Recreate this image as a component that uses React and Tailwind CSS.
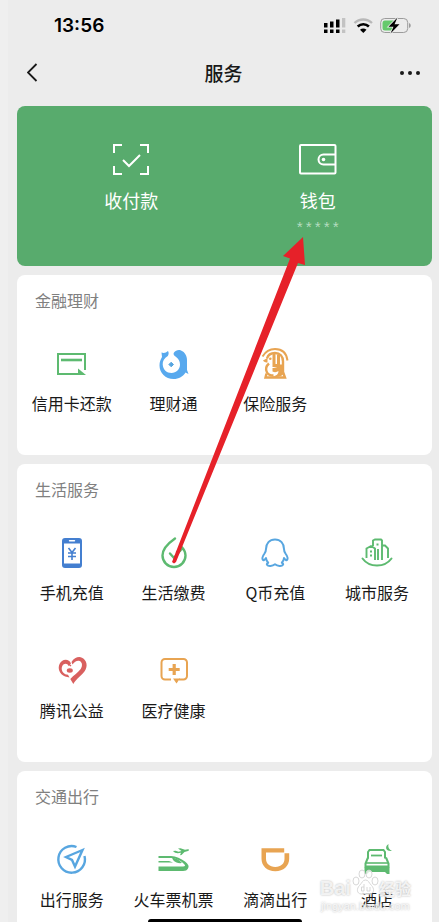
import React from "react";

const GREEN = "#5dba70";
const BLUE = "#58a6e0";
const ORANGE = "#e8a452";

function Icon({ children }) {
  return (
    <svg className="h-9 w-9" viewBox="0 0 36 36" fill="none" aria-hidden="true">
      {children}
    </svg>
  );
}

const CreditCardIcon = () => (
  <Icon>
    <path d="M31 24V8H4v20h22" stroke={GREEN} strokeWidth="2" />
    <path d="M7 14h21" stroke={GREEN} strokeWidth="2.600" />
    <path d="M24 22.500l8 6.500h-8z" fill={GREEN} />
  </Icon>
);

const WealthIcon = () => (
  <Icon>
    <path
      d="M5.500 6.500c2.500 1 4.500.2 6.500-1.500 1 1.500.8 3.500-.2 5C8.300 12 6.500 15 6.700 18.500c.3 5 4 8.500 8.800 8.500s8.500-3.700 8.500-8.500c0-3.500-1.700-6-4.200-7.700-2-1.300-2.800-2.800-1.800-4.300C19.500 4.500 22.500 3.500 25 4.500c4 1.500 6 5.500 6 10v9.500l1.500 4-3-1.500C27 30.500 23 33 17.500 33 9.500 33 3.500 27 3.500 19.500c0-3.500 1-6 2.500-8.500z"
      fill="#58a9ee"
    />
    <path d="M15.200 16.200l2.300 2.300-2.300 2.300-2.300-2.300z" fill={BLUE} stroke={BLUE} strokeLinejoin="round" />
  </Icon>
);

const InsuranceIcon = () => (
  <Icon>
    <path d="M5.500 10.500C8.500 5.500 12.500 3 18 3c7 0 11.500 4 12.500 11.500" stroke={ORANGE} strokeWidth="2" />
    <path d="M10 12.500c1-3.500 4-5.500 8-5.500 5 0 8 3.500 8 8.500V26l2 5.500H8.500l1-4" stroke={ORANGE} strokeWidth="2.400" />
    <path d="M6 14.500l4.500-2.500v4.500c-2 0-3.500-.5-4.500-2z" fill={ORANGE} />
    <path d="M12 17.500c-3 2.500-3.500 6-2 9 1.300 2.500 3.500 3 6.500 3" stroke={ORANGE} strokeWidth="2.400" />
    <path d="M17 7v12.500h4.500V8.500" stroke={ORANGE} strokeWidth="3" />
    <path d="M15.500 22c3 0 6-1 6-3.500h5V28c-2 3-7 3.500-11 2.500 4-.5 6-2.500 6-5.500-1.500 1.300-4 1.500-6 .5z" fill={ORANGE} />
    <circle cx="13.300" cy="12.800" r="1.300" fill={ORANGE} />
  </Icon>
);

const PhoneIcon = () => (
  <Icon>
    <rect x="8" y="3" width="20" height="30" rx="3" fill="#447fd0" />
    <rect x="10" y="8.500" width="16" height="20" fill="#fff" />
    <path d="M15.500 5.700h5" stroke="#fff" strokeWidth="1.400" strokeLinecap="round" />
    <path d="M14.500 13l3.500 4.500 3.500-4.500M18 17.500V25M14 18h8M14 21.500h8" stroke="#447fd0" strokeWidth="1.600" />
  </Icon>
);

const DropIcon = () => (
  <Icon>
    <path
      d="M19 3.500C14 7 6.500 13.500 6.500 20.500a11.500 11.500 0 0 0 23 0c0-3.500-1.500-6-3.500-8.300M21 17c2 0 4-1.500 5-4.500"
      stroke={GREEN}
      strokeWidth="2.400"
      strokeLinecap="round"
    />
    <path d="M14 18.500l4 4.500 5-6" stroke={GREEN} strokeWidth="2.400" strokeLinecap="round" />
  </Icon>
);

const QCoinIcon = () => (
  <Icon>
    <path
      d="M18 4.500c-5.500 0-9 4-9 9.500 0 2-.5 3-1.500 4.500-1.800 2.500-2.500 5-1.700 6.300.7 1 2.200-.2 3.200-1.800.2 2 .8 3.300 2.200 4.800-1.200.4-1.700 1.200-1.200 2 1 1.700 5.500 1.500 8-.5 2.500 2 7 2.200 8 .5.5-.8 0-1.600-1.200-2 1.400-1.500 2-2.800 2.200-4.800 1 1.600 2.500 2.800 3.200 1.800.8-1.300.1-3.800-1.700-6.300C27.500 17 27 16 27 14c0-5.500-3.500-9.500-9-9.500z"
      stroke={BLUE}
      strokeWidth="2"
      strokeLinejoin="round"
    />
  </Icon>
);

const CityIcon = () => (
  <Icon>
    <path d="M7.500 23V13.500L12 11l4 2.500V25M14 11V5.500l2-1h6l1 1V25M23 10.500h3l3 3V23M19 14v11" stroke={GREEN} strokeWidth="1.900" />
    <path d="M3.500 23.500C7 28.300 12 30.500 18 30.500s11-2.200 14.500-7" stroke={GREEN} strokeWidth="2" strokeLinecap="round" />
    <path d="M11 15.500h2v2h-2zM11 19.500h2v2h-2zM17.500 8.500h2v2h-2z" fill={GREEN} />
  </Icon>
);

const CharityIcon = () => (
  <Icon>
    <path
      d="M17 10.500c-1.500-4-6-4.500-9-2.500-4 3-4.500 9-.5 13.200 2 2 5 2.800 8 3.300l-1.500-2.700c-2-.2-3.500-.8-4.600-2-2.400-2.800-2-6.500 0-8.300 2.200-1.500 4.500-.5 5 1.500z"
      fill="#d9605f"
    />
    <path
      d="M17.500 9c2.500-4 7-6 10.500-4.300 5 2.500 6 8.500 2.800 13.300-2.800 4-8.300 7.500-11.500 13l-3-5c3.500-3.700 7.700-6.500 10.400-10 2-3 1.700-6.700-1-8-2.500-1-5.200.8-7.200 3.500z"
      fill="#d9605f"
    />
    <ellipse cx="15.800" cy="17.500" rx="3" ry="2.200" fill="#d9605f" />
    <path d="M14.500 11l2.500 2" stroke="#d9605f" strokeWidth="1.500" />
  </Icon>
);

const HealthIcon = () => (
  <Icon>
    <path d="M15 26.500H9A3.500 3.500 0 0 1 5.500 23V9.500A3.500 3.500 0 0 1 9 6h18.500A3.500 3.500 0 0 1 31 9.500V23a3.500 3.500 0 0 1-3.500 3.500H23" stroke={ORANGE} strokeWidth="2" />
    <path d="M17 25.500h7l-3.500 5z" fill={ORANGE} />
    <path d="M18.200 11v11M12.700 16.500h11" stroke={ORANGE} strokeWidth="3.200" />
  </Icon>
);

const CompassIcon = () => (
  <Icon>
    <path d="M22.500 5A13.300 13.300 0 1 0 30.500 14" stroke={BLUE} strokeWidth="2.400" />
    <path d="M28.500 8L12 15l6 3 3 6.500z" stroke={BLUE} strokeWidth="2.400" />
  </Icon>
);

const TrainIcon = () => (
  <Icon>
    <path d="M2.500 14H15c5 0 10 2.500 14 5.500 3 2.500 4.500 4.500 3 7-.8 1.700-2.500 2.500-5 2.500H2.500v-4.500H27c2 0 2.500-1 1.500-2-3-3.500-8-6.500-13.500-6.500H2.500z" fill={GREEN} />
    <path d="M2.500 19H13l4 1.500H2.500z" fill={GREEN} />
    <path d="M16 15.500c4 .5 7.500 2.500 10 5.500-3.500.5-6.500-.5-8-2-1-1-1.500-2-2-3.500z" fill={GREEN} />
    <path d="M17 9l2.500-.3 3 1L25.500 9 22 6.500l2.500-.3 4.500 1.600 3-.6c1.500 0 1.300 1.200 0 1.700L28.500 10l-3 3-1.500.2 1-2.500c-3 .8-6 .8-8-1.700z" fill={GREEN} />
  </Icon>
);

const DidiIcon = () => (
  <Icon>
    <path d="M4.500 6.300h22.700v4.200H9v6.300C9 21.500 12.500 25 18.300 25s9.200-3.500 9.200-8.200v-5.600h4.700v5.600C32.200 24 26.500 29.300 18.300 29.300S4.500 24 4.500 16.800z" fill={ORANGE} />
  </Icon>
);

const HotelIcon = () => (
  <Icon>
    <path d="M9 16.500V10l1.500-2h14L26 10v6.500" stroke={GREEN} strokeWidth="2" />
    <path d="M12 13.500h11" stroke={GREEN} strokeWidth="1.800" />
    <path d="M9 15.500l-2.500 6v3h23v-3l-2.500-6" stroke={GREEN} strokeWidth="2" />
    <path d="M7 21h22" stroke={GREEN} strokeWidth="1.600" />
    <path d="M5.500 25h25v7H28l-2-2H10l-2 2H5.500z" fill={GREEN} />
    <path d="M29.500 2c-4 2.500-3 7.800 3.500 7-3-1.300-4.300-3.800-3.500-7z" fill={GREEN} />
  </Icon>
);

const SECTIONS = [
  {
    title: "金融理财",
    items: [
      ["信用卡还款", CreditCardIcon],
      ["理财通", WealthIcon],
      ["保险服务", InsuranceIcon],
    ],
  },
  {
    title: "生活服务",
    items: [
      ["手机充值", PhoneIcon],
      ["生活缴费", DropIcon],
      ["Q币充值", QCoinIcon],
      ["城市服务", CityIcon],
      ["腾讯公益", CharityIcon],
      ["医疗健康", HealthIcon],
    ],
  },
  {
    title: "交通出行",
    items: [
      ["出行服务", CompassIcon],
      ["火车票机票", TrainIcon],
      ["滴滴出行", DidiIcon],
      ["酒店", HotelIcon],
    ],
  },
];

function StatusBar() {
  return (
    <div className="flex h-12 items-center justify-between pt-1 pr-7 pl-[46px]">
      <span className="font-['Inter',sans-serif] text-[19px] leading-6 font-semibold text-black">13:56</span>
      <svg className="h-5 w-[88px]" viewBox="324 15 88 20" fill="none" aria-hidden="true">
        <path d="M325 22h3.500v4.500H325zM331 20.500h3.500v6H331zM337 18.500h3.500v8H337zM325 28.500h3.500V32H325zM331 28.500h3.500V32H331zM337 28.500h3.500V32H337z" fill="#000" />
        <path d="M343 17h3.300v9.500H343zM343 28.500h3.300V32H343z" fill="#c3c3c3" />
        <path d="M355.500 22c5-4.700 12.500-4.700 17.500 0" stroke="#b8b8b8" strokeWidth="2.400" />
        <path d="M358.700 25.500c3.200-3 8-3 11.200 0" stroke="#000" strokeWidth="2.600" />
        <path d="M361 28.700c2-1.600 4.500-1.600 6.500 0l-3.200 3.300z" fill="#000" />
        <rect x="381.700" y="17.500" width="27" height="14" rx="4" stroke="#9b9b9b" />
        <path d="M410 22c2.300.8 2.300 4.200 0 5z" fill="#9b9b9b" />
        <path d="M386 19.500h9v10h-9a2.500 2.500 0 0 1-2.500-2.500v-5a2.500 2.500 0 0 1 2.500-2.500z" fill="#65c96c" />
        <path d="M398.500 16.500l-9 9.300h5l-3 6.700 9-9.300h-5z" fill="#000" stroke="#ececec" strokeWidth="1.600" paintOrder="stroke" />
      </svg>
    </div>
  );
}

function NavBar() {
  return (
    <header className="flex h-[50px] items-center justify-between px-[19px]">
      <button type="button" aria-label="返回" className="flex h-6 w-7 items-center">
        <svg className="h-5 w-4" viewBox="0 0 16 20" fill="none">
          <path d="M9.500 1L1 9.500 9.500 18" stroke="#191919" strokeWidth="1.800" />
        </svg>
      </button>
      <h1 className="text-[19px] leading-7 font-medium text-[#191919]">服务</h1>
      <button type="button" aria-label="更多" className="flex h-6 w-7 items-center justify-end">
        <svg className="h-1 w-5" viewBox="0 0 20 4" fill="#191919">
          <circle cx="2" cy="2" r="2" />
          <circle cx="10" cy="2" r="2" />
          <circle cx="18" cy="2" r="2" />
        </svg>
      </button>
    </header>
  );
}

function WalletCard() {
  return (
    <section className="grid h-40 grid-cols-2 items-start rounded-lg bg-[#58ab6d] px-[21px] pt-[34px] text-white">
      <button type="button" className="flex flex-col items-center">
        <svg className="h-10 w-10" viewBox="0 0 40 40" fill="none" stroke="#fff" strokeWidth="2">
          <path d="M11 5H3v8M29 5h8v8M11 34H3v-8M29 34h8v-8M12 20l6 6 11-11" />
        </svg>
        <span className="mt-2 text-[18px] leading-6">收付款</span>
      </button>
      <button type="button" className="flex flex-col items-center">
        <svg className="h-10 w-10" viewBox="0 0 40 40" fill="none" stroke="#fff" strokeWidth="2">
          <rect x="2" y="5" width="35.500" height="28.500" rx="1" />
          <path d="M37.500 14.500H25.500a5 5 0 0 0 0 10h12" />
          <circle cx="25.500" cy="19.500" r="1.800" fill="#fff" stroke="none" />
        </svg>
        <span className="mt-2 text-[18px] leading-6">钱包</span>
        <span className="mt-2 font-['Liberation_Mono',monospace] text-[15px] leading-5 text-[#b4dcbf]">*****</span>
      </button>
    </section>
  );
}

function ServiceCard({ title, items }) {
  return (
    <section className="rounded-lg bg-white pt-[13px] pb-10">
      <h2 className="px-[18px] text-base leading-6 text-[#808080]">{title}</h2>
      <div className="mt-[34px] grid grid-cols-4 gap-y-[49px] px-1">
        {items.map(([label, Glyph]) => (
          <button key={label} type="button" className="flex flex-col items-center gap-[9px]">
            <Glyph />
            <span className="text-base leading-6 whitespace-nowrap text-[#191919]">{label}</span>
          </button>
        ))}
      </div>
    </section>
  );
}

function Watermark() {
  return (
    <div className="pointer-events-none absolute right-7 bottom-[10px] flex flex-col items-center text-white/80 [text-shadow:0_0_2px_#aaaaaa]">
      <div className="flex items-end">
        <span className="font-['Liberation_Sans',sans-serif] text-[20px] leading-6 font-bold">Bai</span>
        <svg className="mb-1 h-7 w-7" viewBox="0 0 28 28" fill="#fff" fillOpacity="0.75" stroke="#d4d4d4" strokeWidth="0.900">
          <ellipse cx="5" cy="13" rx="3" ry="4" />
          <ellipse cx="11" cy="6" rx="3" ry="4" />
          <ellipse cx="18" cy="6" rx="3" ry="4" />
          <ellipse cx="24" cy="13" rx="3" ry="4" />
          <path d="M14.500 12c-3 0-3.500 3-6 5.500-3 3-3 8 1.500 8.500h9c4.500-.5 4.500-5.500 1.500-8.500-2.500-2.500-3-5.500-6-5.500z" />
          <path d="M13 16v7h-2.500v-4H13M16 19v4h3v-4" fill="none" />
        </svg>
        <span className="text-[16px] leading-6 font-bold">经验</span>
      </div>
      <span className="font-['Liberation_Sans',sans-serif] text-[11px] leading-3">jingyan.baidu.com</span>
    </div>
  );
}

export default function App() {
  return (
    <div className="relative h-screen overflow-hidden bg-[#efefef] pl-2 font-['Noto_Sans_CJK_SC',sans-serif]">
      <div className="min-h-full bg-[#ececec]">
        <StatusBar />
        <NavBar />
        <main className="flex flex-col gap-[9px] pt-2 pr-[7px] pl-[9px]">
          <WalletCard />
          {SECTIONS.map((section) => (
            <ServiceCard key={section.title} {...section} />
          ))}
        </main>
      </div>

      <Watermark />

      <svg className="pointer-events-none absolute top-[237px] left-[172px] h-[327px] w-[134px]" viewBox="172 237 134 327" aria-hidden="true">
        <path d="M303 237l-20 19 7 2.500L172 562l2 1.500 2-1.500L298 263l7 2z" fill="#e62129" />
      </svg>

      <div className="absolute inset-x-0 bottom-0 mx-auto flex justify-center pl-[10px]">
        <div className="h-[3px] w-[154px] rounded-t-sm bg-black" />
      </div>
    </div>
  );
}
